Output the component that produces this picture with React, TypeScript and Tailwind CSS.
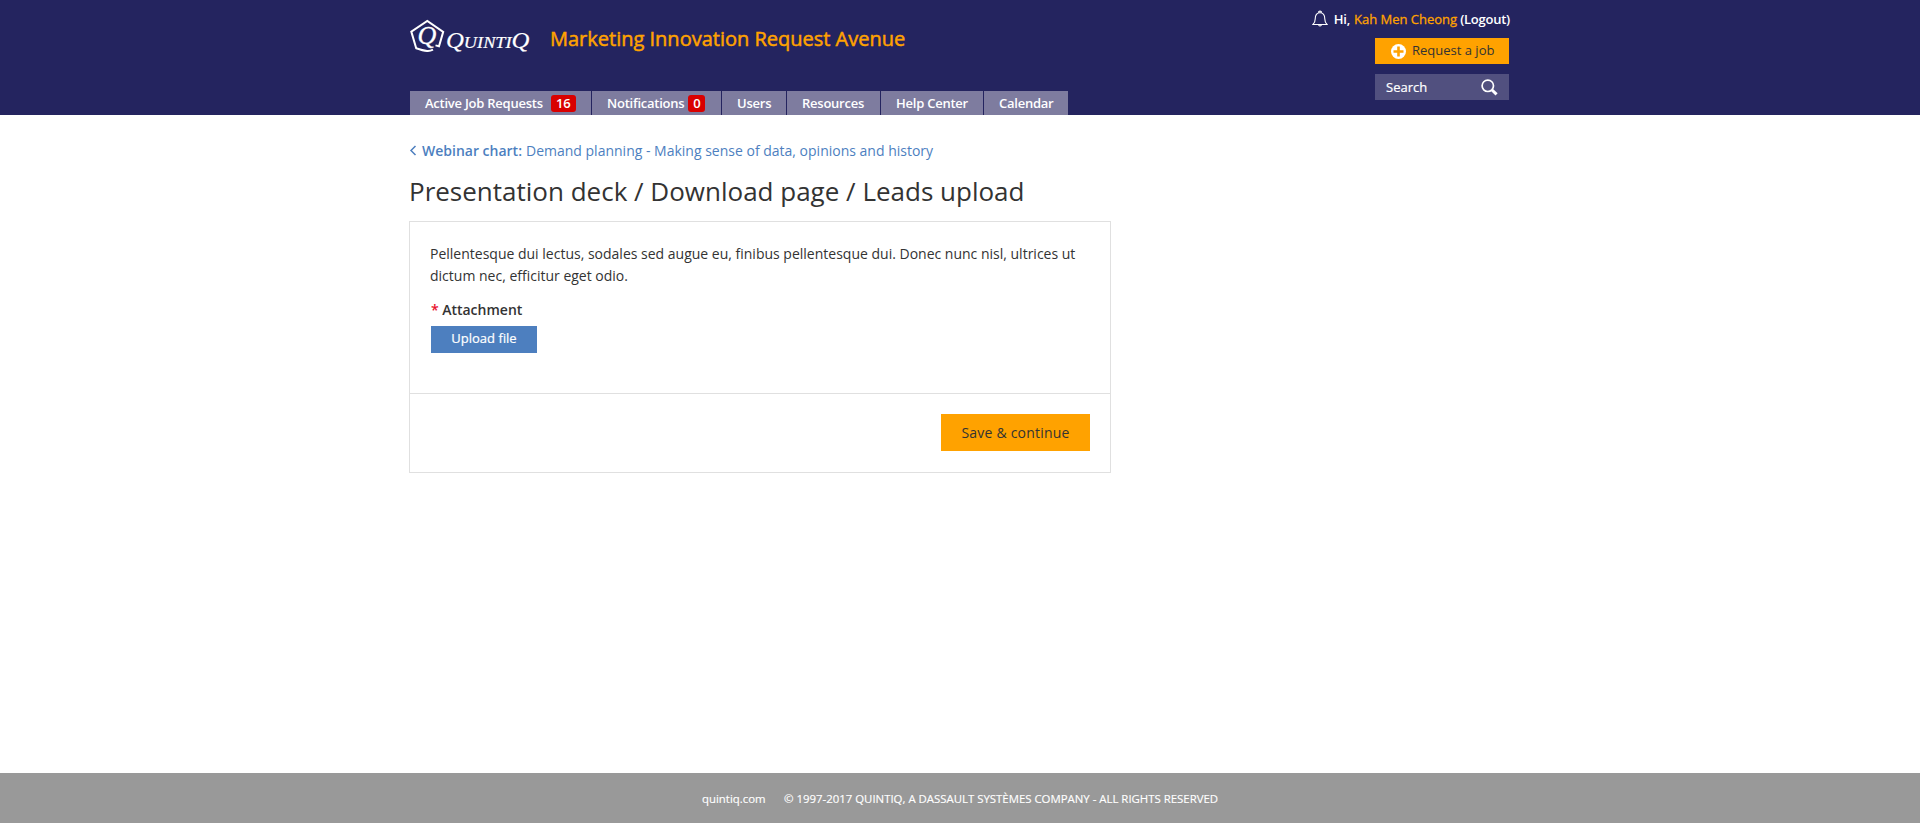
const tabs = [
  { label: "Active Job Requests", width: "w-[181px]", count: "16", badge: "ml-[8px] w-[25px]" },
  { label: "Notifications", width: "w-[129px]", count: "0", badge: "ml-[4px] w-[17px]" },
  { label: "Users", width: "w-[64px]" },
  { label: "Resources", width: "w-[93px]" },
  { label: "Help Center", width: "w-[102px]" },
  { label: "Calendar", width: "w-[84px]" },
];

function Logo() {
  return (
    <svg width="124" height="36" viewBox="0 0 124 36" className="block" fill="none">
      <path d="M25.5 26.4 L29 27.2 L33.2 12.8 L17.3 2 L1.3 12.6 L6.2 29.2 Q13 31.6 17 31.9 Q20 32.2 23 30.6" stroke="#fff" strokeWidth="2" />
      <text x="7.5" y="24.5" fontFamily="Liberation Serif, serif" fontStyle="italic" fontSize="26" fill="#fff" stroke="#fff" strokeWidth="0.3">Q</text>
      <text x="36" y="29" fontFamily="Liberation Serif, serif" fontStyle="italic" fill="#fff" stroke="#fff" strokeWidth="0.2" fontSize="23" textLength="83.5" lengthAdjust="spacingAndGlyphs">
        <tspan>Q</tspan><tspan fontSize="17">UINTI</tspan><tspan>Q</tspan>
      </text>
    </svg>
  );
}

function Bell() {
  return (
    <svg width="16" height="18" viewBox="0 0 16 18" fill="none" stroke="#fff" strokeWidth="1.1" className="mt-px block">
      <path d="M6.7 2.6 V1.6 Q8 .6 9.3 1.6 V2.6 M3.2 9 C3.2 5 4.8 2.8 8 2.8 S12.8 5 12.8 9 C12.8 12 13.6 13 15 14.5 H1 C2.4 13 3.2 12 3.2 9 Z M6.5 15.2 Q8 16.8 9.5 15.2" />
    </svg>
  );
}

export default function App() {
  return (
    <div className="flex h-[823px] flex-col bg-white font-['Open_Sans',sans-serif] text-[#333]">
      <header className="h-[115px] bg-[#24245f] pr-[411px] pl-[410px] text-white">
        <div className="flex h-[91px] justify-between">
          <div className="flex pt-[19px]">
            <Logo />
            <span className="mt-[6px] ml-[16px] h-[28px] text-[20px] leading-[28px] whitespace-nowrap text-[#ffa200] [-webkit-text-stroke:0.5px]">Marketing Innovation Request Avenue</span>
          </div>
          <div className="flex flex-col items-end">
            <div className="-mr-px flex h-[38px] shrink-0 items-start pt-[9px] text-[13px] leading-[20px] whitespace-nowrap">
              <Bell />
              <span className="ml-[6px] font-semibold tracking-[-0.24px]">Hi,</span>
              <span className="ml-[4px] text-[#ffa200] [-webkit-text-stroke:0.3px]">Kah Men Cheong</span>
              <span className="ml-[3px] font-semibold tracking-[-0.24px]">(Logout)</span>
            </div>
            <button className="flex h-[26px] w-[134px] shrink-0 items-center bg-[#ffa200] pl-[16px] text-[13px] text-[#333]">
              <svg width="15" height="15" viewBox="0 0 15 15" className="mt-px"><circle cx="7.5" cy="7.5" r="7.5" fill="#fff" /><path d="M7.5 2.5v10M2.5 7.5h10" stroke="#ffa200" strokeWidth="2.6" /></svg>
              <span className="ml-[6px]">Request a job</span>
            </button>
            <div className="mt-[10px] flex h-[26px] w-[134px] shrink-0 items-center justify-between bg-[#51507f] pr-[11px] pl-[11px] text-[13px]">
              <span className="pt-[2px] [-webkit-text-stroke:0.2px]">Search</span>
              <svg width="17" height="17" viewBox="0 0 17 17" fill="none" stroke="#fff"><circle cx="6.8" cy="6.8" r="5.7" strokeWidth="1.7" /><path d="M11 11l4.6 4.4" strokeWidth="3" /></svg>
            </div>
          </div>
        </div>
        <nav className="flex h-[24px] gap-px text-[13px] leading-[16px] font-semibold tracking-[-0.24px] whitespace-nowrap">
          {tabs.map((t) => (
            <a key={t.label} className={`flex items-start bg-[#7e7c9f] pt-[4px] pl-[15px] ${t.width}`}>
              <span>{t.label}</span>
              {t.count && <span className={`flex h-[17px] justify-center rounded-[3px] bg-[#d90000] ${t.badge}`}>{t.count}</span>}
            </a>
          ))}
        </nav>
      </header>
      <main className="flex-1 pl-[409px]">
        <div className="mt-[26px] flex h-[20px] items-center text-[14px] leading-[20px] whitespace-nowrap text-[#4d7fbf]">
          <svg width="8" height="11" viewBox="0 0 8 11" fill="none" stroke="#4d7fbf" strokeWidth="1.5" className="mb-[2px]"><path d="M6.5 1 L2 5.5 L6.5 10" /></svg>
          <span className="ml-[5px] font-semibold">Webinar chart:</span>
          <span className="ml-[4px]">Demand planning - Making sense of data, opinions and history</span>
        </div>
        <h1 className="mt-[12px] h-[36px] text-[26px] leading-[36px]">Presentation deck / Download page / Leads upload</h1>
        <section className="mt-[12px] h-[252px] w-[702px] border border-[#e0e0e0]">
          <div className="h-[172px] border-b border-[#e0e0e0] pt-[21px] pl-[20px]">
            <p className="text-[14px] leading-[22px] whitespace-nowrap">
              Pellentesque dui lectus, sodales sed augue eu, finibus pellentesque dui. Donec nunc nisl, ultrices ut
              <br />
              dictum nec, efficitur eget odio.
            </p>
            <div className="mt-[13px] flex h-[20px] pl-px text-[14px] leading-[20px] font-semibold">
              <span className="text-[#e8112d]">*</span>
              <span className="ml-[3.5px]">Attachment</span>
            </div>
            <button className="mt-[6px] ml-px flex h-[27px] w-[106px] items-center justify-center bg-[#4d7fbf] pb-[2px] text-[13px] text-white [-webkit-text-stroke:0.2px]">Upload file</button>
          </div>
          <div className="flex justify-end pt-[20px] pr-[20px]">
            <button className="h-[37px] w-[149px] bg-[#ffa200] text-[14px] tracking-[0.2px] text-[#333]">Save &amp; continue</button>
          </div>
        </section>
      </main>
      <footer className="flex h-[50px] items-center bg-[#999] pt-px pl-[702px] text-[11.4px] whitespace-nowrap text-white [-webkit-text-stroke:0.15px]">
        <span>quintiq.com</span>
        <span className="ml-[18.5px]">© 1997-2017 QUINTIQ, A DASSAULT SYSTÈMES COMPANY - ALL RIGHTS RESERVED</span>
      </footer>
    </div>
  );
}
